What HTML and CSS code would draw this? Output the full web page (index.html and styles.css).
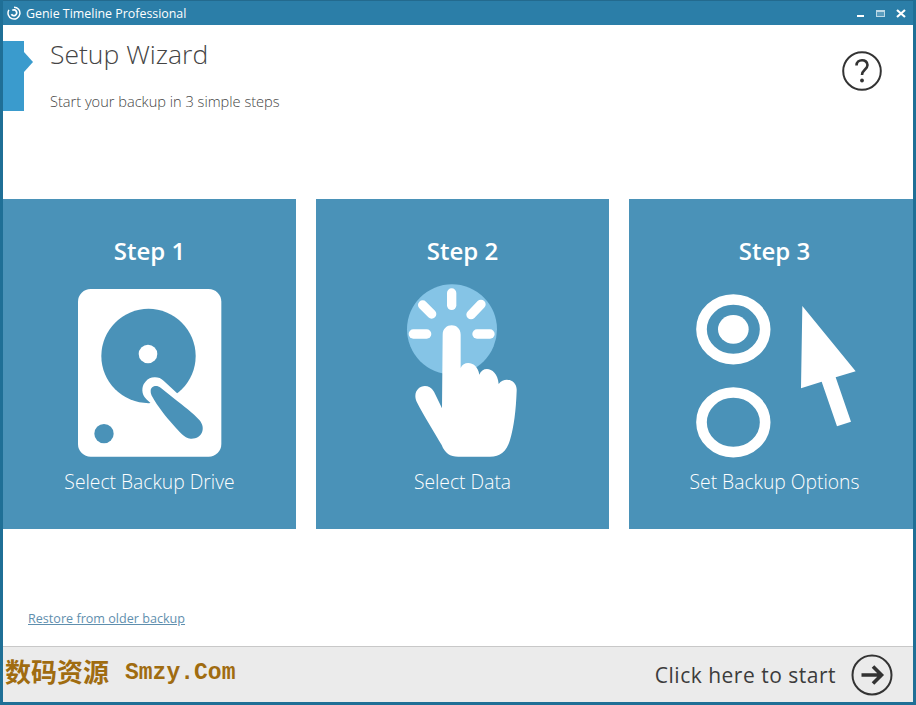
FILE: index.html
```html
<!DOCTYPE html>
<html lang="en">
<head>
  <meta charset="UTF-8">
  <title>Genie Timeline Professional</title>
  <link rel="stylesheet" href="styles.css">
</head>
<body>
  <div class="window">
    <!-- Title bar -->
    <div class="titlebar">
      <svg class="app-icon" viewBox="0 0 16 16">
        <path d="M2.2 4.500 A6.800 6.800 0 1 0 8 1.300" fill="none" stroke="#fff" stroke-width="1.700"/>
        <path d="M6 5 A3.300 3.300 0 1 1 5 9.500" fill="none" stroke="#fff" stroke-width="2"/>
      </svg>
      <span class="app-title">Genie Timeline Professional</span>
      <div class="win-controls">
        <span class="win-min"></span>
        <span class="win-max"></span>
        <svg class="win-close" viewBox="0 0 10 9">
          <path d="M1 1 L9 8 M9 1 L1 8" stroke="#fff" stroke-width="2.200"/>
        </svg>
      </div>
    </div>

    <!-- Header -->
    <div class="header">
      <div class="header-marker"></div>
      <div class="header-text">
        <h1>Setup Wizard</h1>
        <p>Start your backup in 3 simple steps</p>
      </div>
      <svg class="help-icon" viewBox="0 0 40 40">
        <circle cx="20" cy="20" r="18.800" fill="none" stroke="#333" stroke-width="2"/>
        <path d="M14.500 14.500 C14.500 7.500 25.500 7.500 25.500 14 C25.500 18.500 20 18.500 20 24" fill="none" stroke="#333" stroke-width="2.600"/>
        <circle cx="20" cy="29.500" r="1.900" fill="#333"/>
      </svg>
    </div>

    <!-- Steps -->
    <div class="steps">
      <div class="step">
        <h2>Step 1</h2>
        <svg class="step-icon" viewBox="0 0 540 570">
          <rect x="54" y="27" width="430" height="503" rx="38" fill="#fff"/>
          <circle cx="265.500" cy="228" r="141.500" fill="#4a92b8"/>
          <circle cx="264" cy="222" r="28" fill="#fff"/>
          <path d="M285 330 L415 450" stroke="#fff" stroke-width="76" stroke-linecap="round"/>
          <path d="M272 333 C272 318 290 314 302 323 L345 358 C370 378 400 400 418 420 C440 445 425 478 392 476 C372 474 358 455 340 435 C318 410 292 378 277 350 C274 345 272 340 272 333 Z" fill="#4a92b8"/>
          <circle cx="132" cy="461" r="29" fill="#4a92b8"/>
        </svg>
        <p>Select Backup Drive</p>
      </div>
      <div class="step">
        <h2>Step 2</h2>
        <svg class="step-icon step-icon-hand" viewBox="0 0 540 570">
          <circle cx="186" cy="148" r="135" fill="#85c4e6"/>
          <g stroke="#fff" stroke-width="28" stroke-linecap="round">
            <path d="M185 39 V76"/>
            <path d="M98 75 L125 102"/>
            <path d="M273 73 L243 104"/>
            <path d="M70 162 H110"/>
            <path d="M261 162 H300"/>
          </g>
          <path d="M158 164 C158 126 212 126 212 164 L212 264 C222 240 262 244 268 284 C278 256 322 262 326 312 C344 288 382 300 380 332 C378 390 372 440 360 480 C350 515 330 530 300 530 L205 530 C180 530 165 520 155 495 C135 460 100 405 80 365 C62 325 110 300 132 335 L156 385 Z" fill="#fff"/>
        </svg>
        <p>Select Data</p>
      </div>
      <div class="step">
        <h2>Step 3</h2>
        <svg class="step-icon step-icon-wide" viewBox="0 0 570 570">
          <ellipse cx="160" cy="148" rx="95.500" ry="89.500" fill="none" stroke="#fff" stroke-width="32"/>
          <ellipse cx="160" cy="148" rx="46" ry="43" fill="#fff"/>
          <ellipse cx="160" cy="427" rx="95.500" ry="89.500" fill="none" stroke="#fff" stroke-width="32"/>
          <path d="M367 78 L527 274 L467 292 L513 425 L471 439 L425 305 L363 325 Z" fill="#fff"/>
        </svg>
        <p>Set Backup Options</p>
      </div>
    </div>

    <div class="restore"><a href="#">Restore from older backup</a></div>

    <!-- Footer -->
    <div class="footer">
      <div class="watermark"><span class="wm-cjk">数码资源</span><span class="wm-latin">Smzy.Com</span></div>
      <div class="start">
        <span>Click here to start</span>
        <svg class="start-icon" viewBox="0 0 42 42">
          <circle cx="21" cy="21" r="19.500" fill="none" stroke="#333" stroke-width="2"/>
          <path d="M10.500 21 H30 M22 12.500 L30.500 21 L22 29.500" fill="none" stroke="#333" stroke-width="3.600"/>
        </svg>
      </div>
    </div>
  </div>
</body>
</html>
```

FILE: styles.css
```css
html, body {
  margin: 0;
  padding: 0;
  height: 100%;
}

body {
  font-family: "Open Sans", "Noto Sans", sans-serif;
  background: #fff;
}

.window {
  box-sizing: border-box;
  width: 916px;
  height: 705px;
  display: flex;
  flex-direction: column;
  overflow: hidden;
  border-left: 3px solid #1f6f96;
  border-right: 3px solid #1f6f96;
  border-bottom: 3px solid #1f6f96;
  background: #fff;
}

.titlebar {
  flex: none;
  height: 25px;
  margin: 0 -3px;
  padding: 0 6px;
  box-sizing: border-box;
  display: flex;
  align-items: center;
  background: #2b7ea8;
  border-top: 1px solid #236a8e;
  color: #fff;
}

.app-icon {
  width: 14px;
  height: 14px;
  margin-left: 1px;
  margin-right: 5px;
  margin-top: -1px;
}

.app-title {
  font-size: 12.400px;
  margin-top: 1px;
}

.win-controls {
  margin-left: auto;
  display: flex;
  align-items: center;
  gap: 11px;
  padding-right: 4px;
}

.win-min {
  width: 7px;
  height: 2px;
  margin-top: 6px;
  margin-right: 1px;
  background: #fff;
}

.win-max {
  box-sizing: border-box;
  width: 9px;
  height: 7px;
  border: 1px solid #bcd8e6;
  border-top-width: 2px;
  background: #5a9cbe;
}

.win-close {
  width: 10px;
  height: 9px;
}

.header {
  flex: none;
  height: 174px;
  display: flex;
  align-items: flex-start;
  position: relative;
}

.header-marker {
  width: 21px;
  height: 70px;
  margin-top: 16px;
  background: #3a9bcd;
  position: relative;
}

/* little arrow on the marker */
.header-marker::after {
  content: "";
  position: absolute;
  left: 21px;
  top: 11px;
  border-left: 9px solid #3a9bcd;
  border-top: 10.500px solid transparent;
  border-bottom: 10.500px solid transparent;
}

.header-text {
  margin-left: 26px;
  color: #444;
}

.header-text h1 {
  margin: 10px 0 0;
  font-size: 26.500px;
  font-weight: 300;
  line-height: 38px;
}

.header-text p {
  margin: 18px 0 0;
  font-size: 14.600px;
  font-weight: 300;
  line-height: 20px;
}

.help-icon {
  width: 40px;
  height: 40px;
  margin: 26px 31px 0 auto;
}

.steps {
  flex: none;
  display: flex;
  gap: 20px;
  height: 330px;
}

.step {
  flex: none;
  width: 293px;
  height: 330px;
  display: flex;
  flex-direction: column;
  align-items: center;
  background: #4a92b8;
  color: #fff;
}

/* runs under the window edge */
.step:last-child {
  width: 291px;
}

.step h2 {
  margin: 35px 0 0;
  font-size: 24px;
  font-weight: 600;
  line-height: 34px;
}

.step-icon {
  width: 180px;
  height: 190px;
  margin-top: 12px;
}

.step-icon-hand {
  margin-left: 35px;
}

.step-icon-wide {
  width: 190px;
}

.step p {
  margin: -1px 0 0;
  font-size: 19.300px;
  font-weight: 300;
  line-height: 26px;
}

.restore {
  flex: none;
  margin-top: 81px;
  padding-left: 25px;
  font-size: 12.600px;
  line-height: 18px;
}

.restore a {
  color: #5f8fae;
}

.footer {
  flex: none;
  margin-top: auto;
  height: 56px;
  box-sizing: border-box;
  border-top: 1px solid #c8c8c8;
  background: #ebebeb;
  display: flex;
  align-items: center;
  justify-content: space-between;
}

.watermark {
  display: flex;
  align-items: center;
  gap: 16px;
  padding-left: 2px;
  font-weight: 700;
  color: #a06c10;
  white-space: nowrap;
  margin-top: -3px;
}

.wm-cjk {
  font-family: "Noto Sans CJK SC", sans-serif;
  font-size: 26px;
  margin-top: -6px;
}

.wm-latin {
  font-family: "Liberation Mono", monospace;
  font-size: 23px;
}

.start {
  display: flex;
  align-items: center;
  gap: 15px;
  padding-right: 20px;
  font-size: 21px;
  letter-spacing: 0.500px;
  color: #3c3c3c;
}

.start-icon {
  width: 42px;
  height: 42px;
}
```
